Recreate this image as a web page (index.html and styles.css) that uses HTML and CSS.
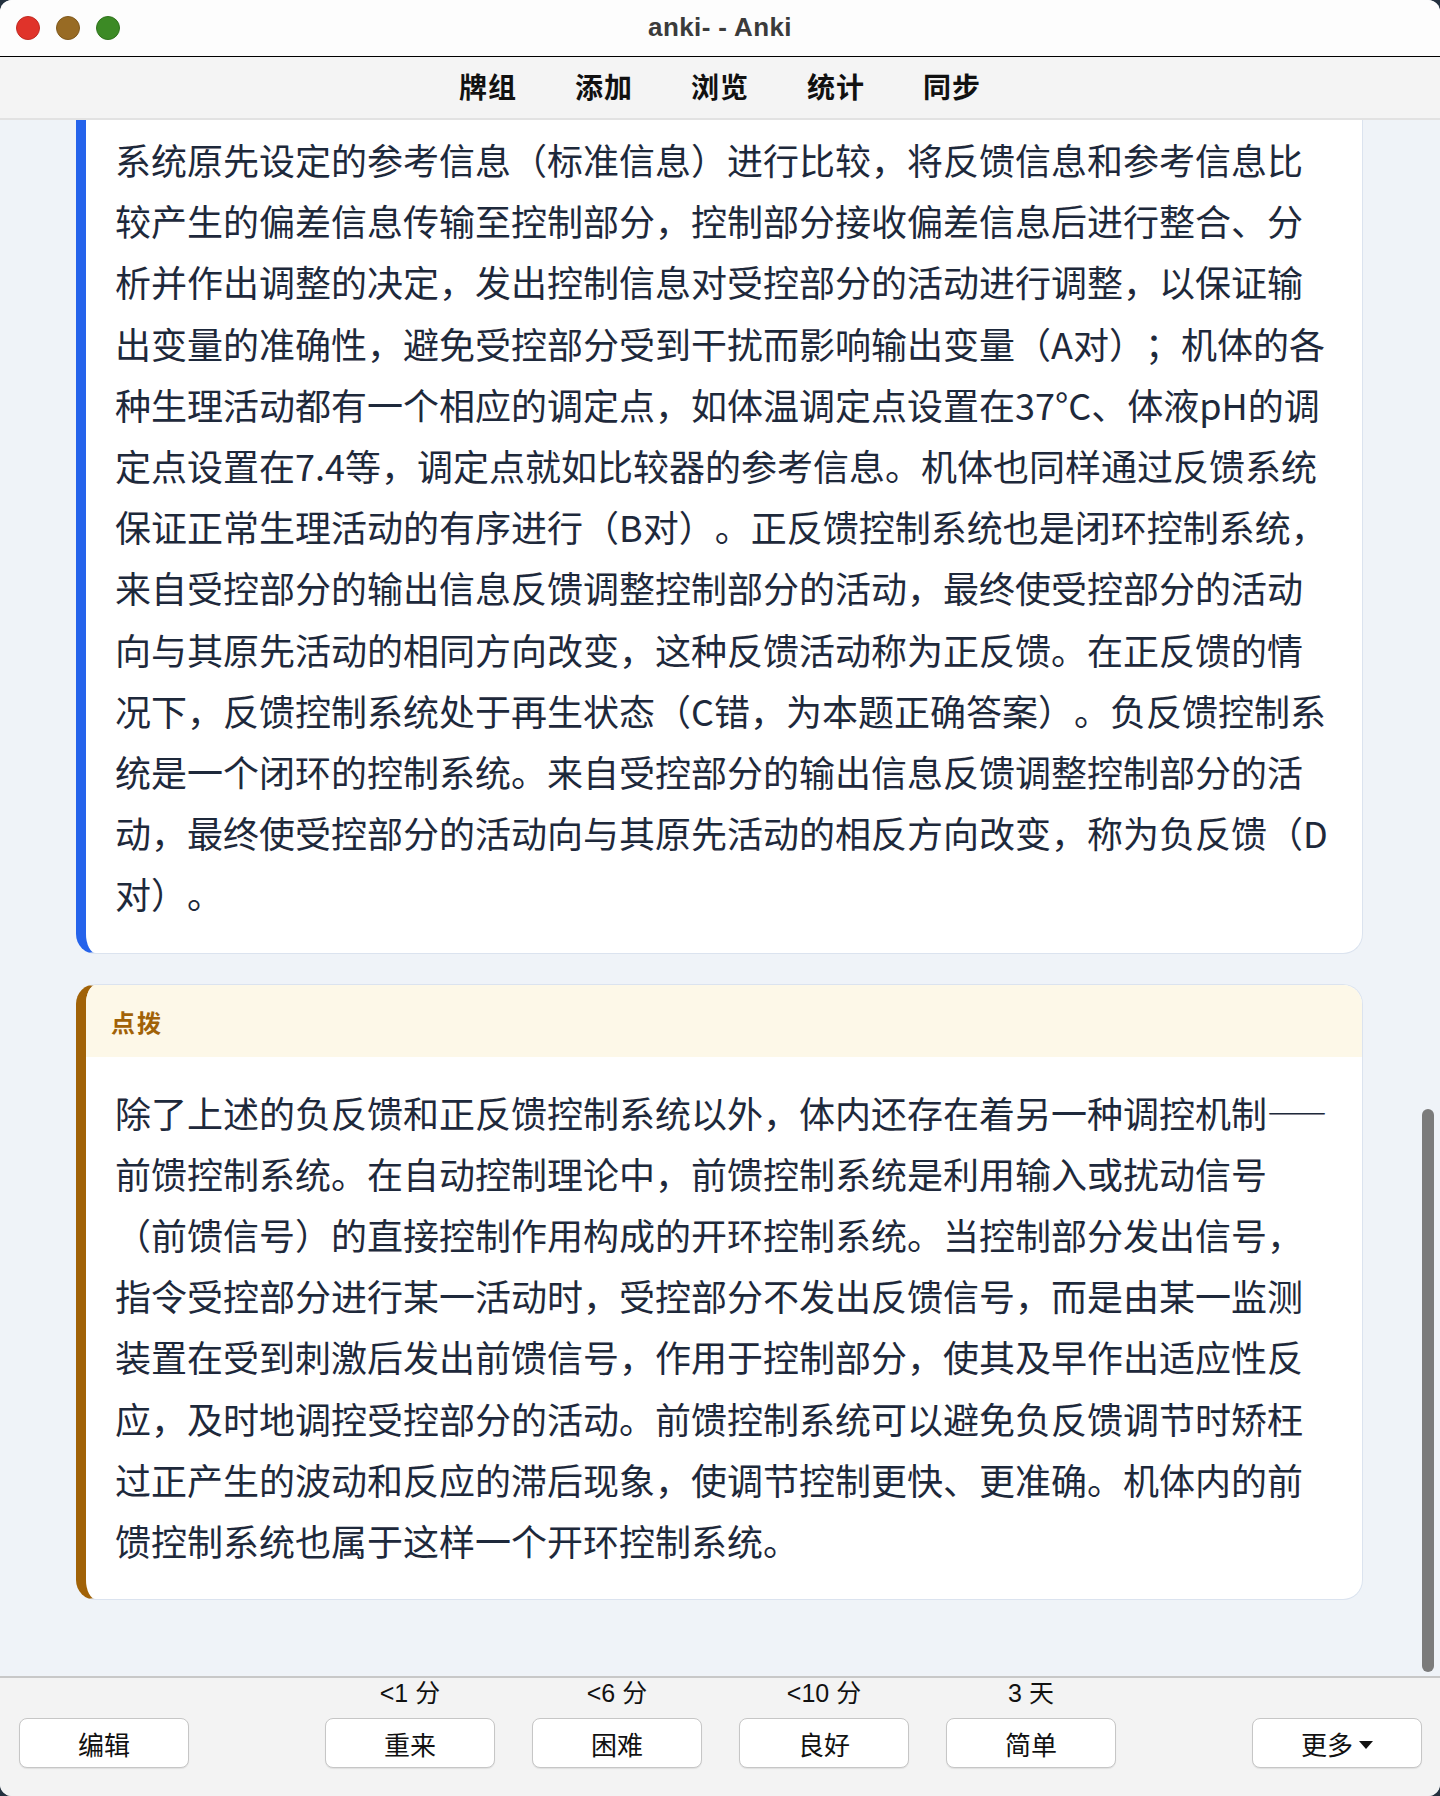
FILE: index.html
```html
<!DOCTYPE html>
<html lang="zh-CN">
<head>
    <meta charset="UTF-8">
    <title>anki- - Anki</title>
    <link rel="stylesheet" href="styles.css">
</head>
<body>
    <div class="window">
        <div class="titlebar">
            <div class="lights">
                <span class="light red"></span>
                <span class="light yellow"></span>
                <span class="light green"></span>
            </div>
            <div class="title">anki- - Anki</div>
        </div>
        <ul class="toolbar">
            <li>牌组</li>
            <li>添加</li>
            <li>浏览</li>
            <li>统计</li>
            <li>同步</li>
        </ul>
        <div class="reviewer">
            <div class="card card-answer">
                <p>系统原先设定的参考信息（标准信息）进行比较，将反馈信息和参考信息比较产生的偏差信息传输至控制部分，控制部分接收偏差信息后进行整合、分析并作出调整的决定，发出控制信息对受控部分的活动进行调整，以保证输出变量的准确性，避免受控部分受到干扰而影响输出变量（A对）；机体的各种生理活动都有一个相应的调定点，如体温调定点设置在37°C、体液pH的调定点设置在7.4等，调定点就如比较器的参考信息。机体也同样通过反馈系统保证正常生理活动的有序进行（B对）。正反馈控制系统也是闭环控制系统，来自受控部分的输出信息反馈调整控制部分的活动，最终使受控部分的活动向与其原先活动的相同方向改变，这种反馈活动称为正反馈。在正反馈的情况下，反馈控制系统处于再生状态（C错，为本题正确答案）。负反馈控制系统是一个闭环的控制系统。来自受控部分的输出信息反馈调整控制部分的活动，最终使受控部分的活动向与其原先活动的相反方向改变，称为负反馈（D对）。</p>
            </div>
            <div class="card card-hint">
                <div class="hint-head">点拨</div>
                <p>除了上述的负反馈和正反馈控制系统以外，体内还存在着另一种调控机制<span class="dash">——</span>前馈控制系统。在自动控制理论中，前馈控制系统是利用输入或扰动信号（前馈信号）的直接控制作用构成的开环控制系统。当控制部分发出信号，指令受控部分进行某一活动时，受控部分不发出反馈信号，而是由某一监测装置在受到刺激后发出前馈信号，作用于控制部分，使其及早作出适应性反应，及时地调控受控部分的活动。前馈控制系统可以避免负反馈调节时矫枉过正产生的波动和反应的滞后现象，使调节控制更快、更准确。机体内的前馈控制系统也属于这样一个开环控制系统。</p>
            </div>
            <div class="scrollbar"></div>
        </div>
        <div class="answer-bar">
            <div class="side">
                <button class="btn">编辑</button>
            </div>
            <div class="eases">
                <div class="ease">
                    <span class="due">&lt;1 分</span>
                    <button class="btn">重来</button>
                </div>
                <div class="ease">
                    <span class="due">&lt;6 分</span>
                    <button class="btn">困难</button>
                </div>
                <div class="ease">
                    <span class="due">&lt;10 分</span>
                    <button class="btn">良好</button>
                </div>
                <div class="ease">
                    <span class="due">3 天</span>
                    <button class="btn">简单</button>
                </div>
            </div>
            <div class="side">
                <button class="btn">更多<span class="caret"></span></button>
            </div>
        </div>
    </div>
</body>
</html>
```
FILE: styles.css
```css
*{
    margin:0;
    padding:0;
    box-sizing:border-box;
}
ul,ol{
    list-style:none;
}
body{
    background-color:#24313f;
    font-family:"Noto Sans CJK SC", sans-serif;
    text-spacing-trim:space-all;
}
.window{
    width:1440px;
    height:1796px;
    display:flex;
    flex-direction:column;
    background-color:#eff3f8;
    border-radius:12px;
    overflow:hidden;
}
.titlebar{
    height:57px;
    flex:none;
    background-color:#fdfdfd;
    border-bottom:1px solid #000;
    position:relative;
    display:flex;
    align-items:center;
    justify-content:center;
}
.lights{
    position:absolute;
    left:16px;
    top:16px;
    display:flex;
    gap:16px;
}
.light{
    width:24px;
    height:24px;
    border-radius:50%;
    display:block;
}
.red{
    background-color:#e0332a;
    border:1px solid #c22a22;
}
.yellow{
    background-color:#986b24;
    border:1px solid #80591c;
}
.green{
    background-color:#3c8a25;
    border:1px solid #2f731c;
}
.title{
    font-family:"Liberation Sans", sans-serif;
    font-weight:bold;
    font-size:26px;
    color:#3b3b3b;
    letter-spacing:0.4px;
    margin-top:-2px;
}
.toolbar{
    height:63px;
    flex:none;
    background-color:#f4f4f4;
    border-bottom:2px solid #e2e2e2;
    display:flex;
    justify-content:center;
    align-items:center;
    gap:58px;
    padding-bottom:4px;
}
.toolbar li{
    font-size:28px;
    font-weight:bold;
    color:#111;
    letter-spacing:1px;
    line-height:32px;
}
.reviewer{
    flex:1;
    position:relative;
    overflow:hidden;
    padding:0 77px 0 76px;
}
.card{
    background-color:#fff;
    border:1px solid #dbe3ef;
    border-radius:20px;
    color:#1e293b;
    font-size:36px;
    line-height:61.2px;
    overflow:hidden;
}
.card-answer{
    border-left:10px solid #2563eb;
    border-top:none;
    border-radius:0 0 20px 20px;
    padding:9px 29px 28px 29px;
}
.card-hint{
    margin-top:30px;
    border-left:10px solid #a16207;
}
.hint-head{
    background-color:#fdf8e8;
    color:#a16207;
    font-size:24px;
    font-weight:bold;
    line-height:32px;
    letter-spacing:2px;
    padding:21px 25px 19px 25px;
}
.card-hint p{
    padding:25px 29px 28px 29px;
}
.dash{
    font-size:30px;
    font-weight:bold;
    vertical-align:3px;
}
.scrollbar{
    position:absolute;
    right:6px;
    bottom:4px;
    width:12px;
    height:563px;
    border-radius:6px;
    background-color:#7b7b7b;
}
.answer-bar{
    height:120px;
    flex:none;
    background-color:#f3f3f3;
    border-top:2px solid #c8c8c8;
    display:flex;
    justify-content:space-between;
    align-items:flex-end;
    padding:0 18px 28px 19px;
}
.eases{
    display:flex;
    gap:37px;
}
.ease{
    display:flex;
    flex-direction:column;
    align-items:center;
    gap:10px;
}
.due{
    font-family:"Liberation Sans", "Noto Sans CJK SC", sans-serif;
    font-size:25px;
    line-height:30px;
    color:#111;
}
.btn{
    width:170px;
    height:50px;
    background-color:#fff;
    border:1px solid #c6c6c6;
    border-radius:8px;
    box-shadow:0 1px 1px rgba(0,0,0,0.08);
    font-family:"Noto Sans CJK SC", sans-serif;
    font-size:26px;
    color:#111;
    display:flex;
    align-items:center;
    justify-content:center;
    gap:6px;
}
.caret{
    width:0;
    height:0;
    border-left:7px solid transparent;
    border-right:7px solid transparent;
    border-top:8px solid #111;
    margin-top:3px;
}
```
